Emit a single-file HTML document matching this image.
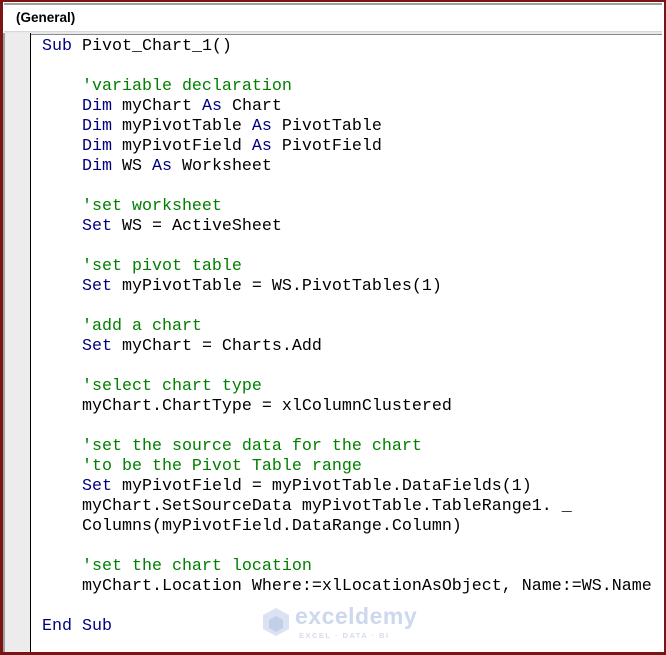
<!DOCTYPE html>
<html><head><style>
body{margin:0;width:666px;height:655px;overflow:hidden;background:#fff;position:relative;font-family:"Liberation Sans",sans-serif}
.frame{position:absolute;left:0;top:0;width:661px;height:650px;border:2px solid #7b1515;border-left-width:3px;border-bottom-width:3px}
.hdr{position:absolute;left:4px;top:3px;width:658px;height:26px;background:#fff;border-top:2px solid #a0a0a0;border-bottom:1px solid #d8d8d8;box-shadow:0 2px 0 #e8e8e8,0 3px 0 #8a8a8a}
.hdr span{position:absolute;left:12px;top:5px;font-weight:bold;font-size:13.5px;color:#000}
.gut{position:absolute;left:3px;top:33px;width:27px;height:619px;background:#ececec;border-right:1px solid #000}
.gut:before{content:"";position:absolute;left:0;top:0;width:2px;height:100%;background:#a0a0a0}
pre{position:absolute;left:42px;top:37px;margin:0;font-family:"Liberation Mono","Courier New",monospace;font-size:16.67px;line-height:20px;color:#000}
.k{color:#00007f}.c{color:#007f00}
.wm{position:absolute;color:#cdd8ee;font-weight:bold;font-size:23px;letter-spacing:0.5px}
.wm small{position:absolute;top:28px;font-size:7.5px;letter-spacing:1.5px;white-space:nowrap;color:#d5dcec}
</style></head><body>
<div class="frame"></div>
<div class="hdr"><span>(General)</span></div>
<div class="gut"></div>
<svg style="position:absolute;left:262px;top:607px" width="28" height="30"><polygon points="14,1 27,8 27,22 14,29 1,22 1,8" fill="#dbe3f2"/><polygon points="14,9 21,13 21,21 14,25 7,21 7,13" fill="#c3cfe6"/></svg>
<div class="wm" style="left:295px;top:603px">exceldemy<small style="left:4px">EXCEL · DATA · BI</small></div>
<pre><span class="k">Sub</span> Pivot_Chart_1()

    <span class="c">'variable declaration</span>
    <span class="k">Dim</span> myChart <span class="k">As</span> Chart
    <span class="k">Dim</span> myPivotTable <span class="k">As</span> PivotTable
    <span class="k">Dim</span> myPivotField <span class="k">As</span> PivotField
    <span class="k">Dim</span> WS <span class="k">As</span> Worksheet

    <span class="c">'set worksheet</span>
    <span class="k">Set</span> WS = ActiveSheet

    <span class="c">'set pivot table</span>
    <span class="k">Set</span> myPivotTable = WS.PivotTables(1)

    <span class="c">'add a chart</span>
    <span class="k">Set</span> myChart = Charts.Add

    <span class="c">'select chart type</span>
    myChart.ChartType = xlColumnClustered

    <span class="c">'set the source data for the chart</span>
    <span class="c">'to be the Pivot Table range</span>
    <span class="k">Set</span> myPivotField = myPivotTable.DataFields(1)
    myChart.SetSourceData myPivotTable.TableRange1. _
    Columns(myPivotField.DataRange.Column)

    <span class="c">'set the chart location</span>
    myChart.Location Where:=xlLocationAsObject, Name:=WS.Name

<span class="k">End Sub</span></pre>
</body></html>
